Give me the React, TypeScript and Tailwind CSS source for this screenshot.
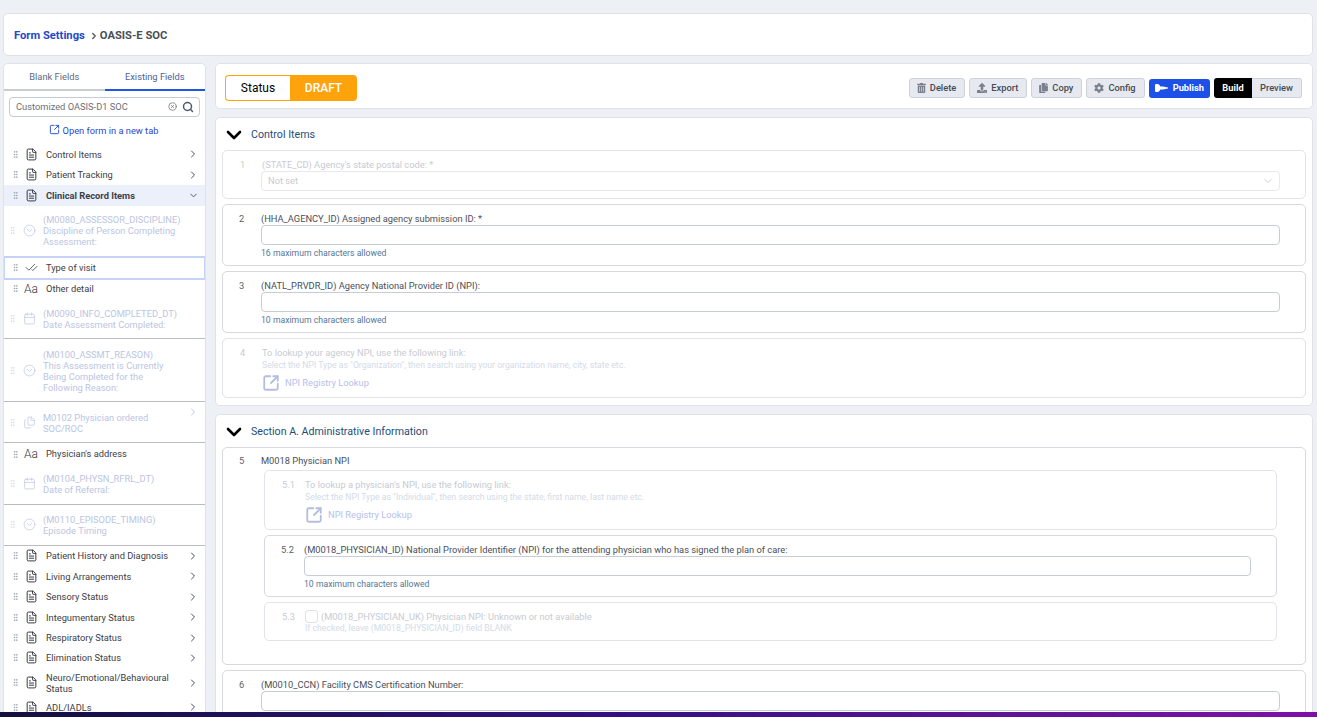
import type { ReactNode } from "react";
import {
  ChevronDown,
  ChevronRight,
  CircleChevronDown,
  CheckCheck,
  Calendar,
  FileText,
  Files,
  GripVertical,
  Search,
  CircleX,
  SquareArrowOutUpRight,
} from "lucide-react";
import { FaTrashAlt, FaCopy, FaCog, FaUpload } from "react-icons/fa";

const DIM = "text-[#bcc5e2]";

function Grip({ dim }: { dim?: boolean }) {
  return <GripVertical className={`w-[9px] h-[9px] shrink-0 ${dim ? "text-[#d5d9e6]" : "text-[#9aa0ac]"}`} />;
}

function GroupRow({ label, open, h = "h-[20.4px]" }: { label: string; open?: boolean; h?: string }) {
  return (
    <div className={`flex items-center pl-[7px] pr-[6px] ${h} ${open ? "bg-[#ebf0fb]" : ""}`}>
      <Grip />
      <FileText className="w-[13px] h-[13px] ml-[5px] text-[#33373f] shrink-0" strokeWidth={1.8} />
      <span className={`ml-[8px] flex-1 text-[9.3px] leading-[11px] text-[#3c4048] ${open ? "font-bold" : ""}`}>{label}</span>
      {open ? (
        <ChevronDown className="w-[11px] h-[11px] text-[#4a4f58]" />
      ) : (
        <ChevronRight className="w-[12px] h-[12px] text-[#4a4f58]" />
      )}
    </div>
  );
}

function DimRow({ lines, icon, h, caret, nudge = "" }: { lines: string[]; icon: ReactNode; h: string; caret?: boolean; nudge?: string }) {
  return (
    <div className={`relative flex items-center pl-[4px] pr-[9px] border-b border-[#b9bcc2] ${h} ${nudge}`}>
      <Grip dim />
      <span className={`ml-[4px] w-[17px] flex justify-center shrink-0 ${DIM}`}>{icon}</span>
      <div className={`ml-[5px] text-[9.3px] leading-[11px] ${DIM}`}>
        {lines.map((l) => (
          <div key={l}>{l}</div>
        ))}
      </div>
      {caret && <ChevronRight className={`absolute right-[6px] top-[4px] w-[12px] h-[12px] ${DIM}`} />}
    </div>
  );
}

function TextRow({ label, h }: { label: string; h: string }) {
  return (
    <div className={`flex items-center pl-[7px] ${h}`}>
      <Grip />
      <span className="ml-[2px] w-[18px] text-center text-[12px] font-light leading-none text-[#33373f]">Aa</span>
      <span className="ml-[6px] text-[9.3px] text-[#3c4048]">{label}</span>
    </div>
  );
}

function Sidebar() {
  return (
    <aside className="w-[203px] shrink-0 bg-white rounded-t-[5px] border border-[#dfe3e9] border-b-0 overflow-hidden">
      <div className="flex h-[27px] text-[9.3px]">
        <div className="flex-1 flex items-center justify-center border-b-[2px] border-[#c8ccd3] text-[#5d6a82]">Blank Fields</div>
        <div className="flex-1 flex items-center justify-center border-b-[2px] border-[#1f57e0] text-[#4a60a0]">Existing Fields</div>
      </div>
      <div className="mx-[5px] mt-[6px] h-[20px] flex items-center pl-[6px] pr-[5px] rounded-[4px] border border-[#c6cad3]">
        <span className="flex-1 text-[9.3px] text-[#6b7078]">Customized OASIS-D1 SOC</span>
        <CircleX className="w-[9px] h-[9px] text-[#6b7078] mb-[2px]" />
        <Search className="ml-[5px] w-[12px] h-[12px] text-[#4c5a6b]" strokeWidth={3} />
      </div>
      <div className="h-[27px] pr-[2px] flex items-center justify-center gap-[3px] text-[9.3px] text-[#1f48d0]">
        <SquareArrowOutUpRight className="w-[11px] h-[11px] mb-[2px]" />
        <span>Open form in a new tab</span>
      </div>
      <GroupRow label="Control Items" />
      <GroupRow label="Patient Tracking" h="h-[21px]" />
      <GroupRow label="Clinical Record Items" open />
      <div className="relative flex items-center pl-[4px] h-[50px]">
        <Grip dim />
        <span className={`ml-[4px] w-[17px] flex justify-center ${DIM}`}>
          <CircleChevronDown className="w-[13px] h-[13px]" strokeWidth={1.3} />
        </span>
        <div className={`ml-[5px] text-[9.3px] leading-[11px] ${DIM}`}>
          <div>(M0080_ASSESSOR_DISCIPLINE)</div>
          <div>Discipline of Person Completing</div>
          <div>Assessment:</div>
        </div>
      </div>
      <div className="flex items-center pl-[6px] h-[24px] border-2 border-[#c5d3f8] -mx-px">
        <Grip />
        <CheckCheck className="ml-[4px] w-[15px] h-[13px] text-[#33373f]" strokeWidth={1.4} />
        <span className="ml-[7px] text-[9.3px] text-[#3c4048]">Type of visit</span>
      </div>
      <TextRow label="Other detail" h="h-[18px]" />
      <DimRow
        h="h-[41px]"
        nudge="pt-[2px]"
        icon={<Calendar className="w-[13px] h-[13px]" strokeWidth={1.3} />}
        lines={["(M0090_INFO_COMPLETED_DT)", "Date Assessment Completed:"]}
      />
      <DimRow
        h="h-[63px]"
        nudge="pt-[2px]"
        icon={<CircleChevronDown className="w-[13px] h-[13px]" strokeWidth={1.3} />}
        lines={["(M0100_ASSMT_REASON)", "This Assessment is Currently", "Being Completed for the", "Following Reason:"]}
      />
      <DimRow
        h="h-[41px]"
        nudge="pt-[2px]"
        caret
        icon={<Files className="w-[13px] h-[13px]" strokeWidth={1.3} />}
        lines={["M0102 Physician ordered", "SOC/ROC"]}
      />
      <TextRow label="Physician's address" h="h-[23px]" />
      <DimRow
        h="h-[39px]"
        nudge="pb-[2px]"
        icon={<Calendar className="w-[13px] h-[13px]" strokeWidth={1.3} />}
        lines={["(M0104_PHYSN_RFRL_DT)", "Date of Referral:"]}
      />
      <DimRow
        h="h-[41px]"
        icon={<CircleChevronDown className="w-[13px] h-[13px]" strokeWidth={1.3} />}
        lines={["(M0110_EPISODE_TIMING)", "Episode Timing"]}
      />
      <GroupRow label="Patient History and Diagnosis" />
      <GroupRow label="Living Arrangements" />
      <GroupRow label="Sensory Status" />
      <GroupRow label="Integumentary Status" />
      <GroupRow label="Respiratory Status" />
      <GroupRow label="Elimination Status" />
      <GroupRow label="Neuro/Emotional/Behavioural Status" h="h-[29px]" />
      <GroupRow label="ADL/IADLs" />
    </aside>
  );
}

function ToolButton({ icon, label }: { icon: ReactNode; label: string }) {
  return (
    <button className="h-[20px] flex items-center gap-[4px] pl-[7px] pr-[8px] rounded-[3px] border border-[#ced2da] bg-[#e6e9ef] text-[9.3px] font-medium text-[#454a54]">
      <span className="text-[#7a808c]">{icon}</span>
      {label}
    </button>
  );
}

function Toolbar() {
  return (
    <div className="h-[46px] pt-[4px] shrink-0 bg-white rounded-[5px] border border-[#dfe3e9] flex items-center justify-between pl-[9px] pr-[10px]">
      <div className="flex h-[26px] text-[12px]">
        <div className="w-[65px] flex items-center justify-center rounded-l-[4px] border border-r-0 border-[#ffa30d] text-black">Status</div>
        <div className="w-[67px] flex items-center justify-center rounded-r-[4px] bg-[#ffa30d] text-white font-medium">DRAFT</div>
      </div>
      <div className="flex items-center gap-[4px]">
        <ToolButton icon={<FaTrashAlt className="w-[9px] h-[10px]" />} label="Delete" />
        <ToolButton icon={<FaUpload className="w-[10px] h-[10px]" />} label="Export" />
        <ToolButton icon={<FaCopy className="w-[9px] h-[10px]" />} label="Copy" />
        <ToolButton icon={<FaCog className="w-[10px] h-[10px]" />} label="Config" />
        <button className="h-[19px] flex items-center gap-[5px] px-[6px] rounded-[3px] bg-[#1d50e6] text-[9.3px] font-bold text-white">
          <svg viewBox="0 0 13 8" className="w-[13px] h-[8px]" fill="currentColor">
            <path d="M0 1 Q0 0 1 0 L3 0 Q4.5 .6 5.5 2.4 L8 2.6 L13 3.6 L13 4.6 L8 5.4 L5.5 5.6 Q4.5 7.4 3 8 L1 8 Q0 8 0 7 Z" />
          </svg>
          Publish
        </button>
        <div className="flex h-[20px] text-[9.3px] font-medium">
          <div className="w-[38px] flex items-center justify-center rounded-l-[3px] bg-black text-white font-bold">Build</div>
          <div className="w-[50px] flex items-center justify-center rounded-r-[3px] border border-l-0 border-[#ced2da] bg-[#e6e9ef] text-[#454a54]">Preview</div>
        </div>
      </div>
    </div>
  );
}

function SectionTitle({ children }: { children: ReactNode }) {
  return (
    <div className="h-[32px] pt-[2px] flex items-center">
      <ChevronDown className="w-[24px] h-[24px] text-black" strokeWidth={2.6} />
      <span className="ml-[5px] text-[10.65px] text-[#1d4d78]">{children}</span>
    </div>
  );
}

function FieldBox({ num, h, dim, nested, children }: { num: string; h?: string; dim?: boolean; nested?: boolean; children: ReactNode }) {
  const pad = dim ? (nested ? "pl-[40px]" : "pl-[39px]") : nested ? "pl-[39px]" : "pl-[38px]";
  return (
    <div className={`relative rounded-[5px] border ${dim ? "border-[#e2e4e9]" : "border-[#d7d9de]"} ${pad} pr-[25px] ${h ?? ""}`}>
      <span className={`absolute top-[7px] text-[9.3px] leading-[13px] ${dim ? "left-[17px] text-[#c8cbd2]" : "left-[16px] text-[#5a5f69]"}`}>{num}</span>
      {children}
    </div>
  );
}

function Label({ dim, children }: { dim?: boolean; children: ReactNode }) {
  return <div className={`pt-[7px] text-[9.3px] leading-[13px] ${dim ? "text-[#c8cbd2]" : "text-[#4a4f5a]"}`}>{children}</div>;
}

function Input() {
  return <div className="h-[20px] rounded-[4px] border border-[#c8ccd6] bg-white" />;
}

function Hint({ children }: { children: ReactNode }) {
  return <div className="mt-[3px] text-[8.66px] leading-[11px] text-[#54769a]">{children}</div>;
}

function LookupLink() {
  return (
    <div className="mt-[3px] flex items-center gap-[5px] text-[9.3px] text-[#b5c0ee]">
      <SquareArrowOutUpRight className="w-[18px] h-[18px] text-[#b4bfe0]" strokeWidth={2.4} />
      <span>NPI Registry Lookup</span>
    </div>
  );
}

function SubHint({ children }: { children: ReactNode }) {
  return <div className="text-[8.66px] leading-[12px] text-[#d3dbe8]">{children}</div>;
}

function Content() {
  return (
    <div className="flex-1 min-w-0 flex flex-col gap-[8px] overflow-hidden">
      <Toolbar />
      <section className="h-[289px] shrink-0 bg-white rounded-[5px] border border-[#dfe3e9] px-[6px]">
        <SectionTitle>Control Items</SectionTitle>
        <div className="flex flex-col gap-[5px]">
          <FieldBox num="1" dim h="h-[49px]">
            <Label dim>(STATE_CD) Agency's state postal code: *</Label>
            <div className="h-[20px] -ml-px rounded-[4px] border border-[#e6e8ec] flex items-center justify-between pl-[6px] pr-[5px] text-[9.3px] text-[#c8cbd2]">
              Not set
              <ChevronDown className="w-[12px] h-[12px] text-[#c8cbd2]" />
            </div>
          </FieldBox>
          <FieldBox num="2" h="h-[62px]">
            <Label>(HHA_AGENCY_ID) Assigned agency submission ID: *</Label>
            <Input />
            <Hint>16 maximum characters allowed</Hint>
          </FieldBox>
          <FieldBox num="3" h="h-[62px]">
            <Label>(NATL_PRVDR_ID) Agency National Provider ID (NPI):</Label>
            <Input />
            <Hint>10 maximum characters allowed</Hint>
          </FieldBox>
          <FieldBox num="4" dim h="h-[60px]">
            <Label dim>To lookup your agency NPI, use the following link:</Label>
            <SubHint>Select the NPI Type as "Organization", then search using your organization name, city, state etc.</SubHint>
            <LookupLink />
          </FieldBox>
        </div>
      </section>
      <section className="flex-1 bg-white rounded-t-[5px] border border-b-0 border-[#dfe3e9] px-[6px] overflow-hidden">
        <SectionTitle>Section A. Administrative Information</SectionTitle>
        <div className="flex flex-col gap-[5px]">
          <div className="relative h-[218px] shrink-0 rounded-[5px] border border-[#d7d9de] pl-[38px] pr-[28px]">
            <span className="absolute left-[16px] top-[6px] text-[9.3px] leading-[13px] text-[#5a5f69]">5</span>
            <div className="pt-[6px] pb-[3px] text-[9.3px] leading-[13px] text-[#4a4f5a]">M0018 Physician NPI</div>
            <div className="ml-[3px] flex flex-col gap-[5px]">
              <FieldBox num="5.1" dim nested h="h-[60px]">
                <Label dim>To lookup a physician's NPI, use the following link:</Label>
                <SubHint>Select the NPI Type as "Individual", then search using the state, first name, last name etc.</SubHint>
                <LookupLink />
              </FieldBox>
              <FieldBox num="5.2" nested h="h-[62px]">
                <Label>(M0018_PHYSICIAN_ID) National Provider Identifier (NPI) for the attending physician who has signed the plan of care:</Label>
                <Input />
                <Hint>10 maximum characters allowed</Hint>
              </FieldBox>
              <FieldBox num="5.3" dim nested h="h-[39px]">
                <div className="pt-[7px] flex items-center gap-[3px] text-[9.3px] leading-[13px] text-[#c8cbd2]">
                  <span className="w-[13px] h-[13px] rounded-[3px] border border-[#dfe1e6]" />
                  (M0018_PHYSICIAN_UK) Physician NPI: Unknown or not available
                </div>
                <div className="-mt-px">
                  <SubHint>If checked, leave (M0018_PHYSICIAN_ID) field BLANK</SubHint>
                </div>
              </FieldBox>
            </div>
          </div>
          <FieldBox num="6" h="h-[62px]">
            <Label>(M0010_CCN) Facility CMS Certification Number:</Label>
            <Input />
          </FieldBox>
        </div>
      </section>
    </div>
  );
}

export default function App() {
  return (
    <div className="h-screen flex flex-col overflow-hidden bg-[#edf0f5] font-['Roboto',sans-serif]">
      <div className="flex-1 min-h-0 flex flex-col pt-[13px] px-[3px] pr-[4px]">
        <header className="h-[43px] pt-[3px] shrink-0 bg-white rounded-[5px] border border-[#dfe3e9] flex items-center pl-[10px] text-[11.2px] font-bold">
          <span className="text-[#1f48c8]">Form Settings</span>
          <ChevronRight className="ml-[4px] mr-[1px] -mt-px w-[10px] h-[10px] text-[#4a4f58]" strokeWidth={3} />
          <span className="text-[#4a4f58]">OASIS-E SOC</span>
        </header>
        <div className="flex-1 min-h-0 mt-[7px] flex gap-[9px]">
          <Sidebar />
          <Content />
        </div>
      </div>
      <div className="h-[5px] shrink-0 bg-gradient-to-r from-[#14103f] via-[#320e80] via-45% to-[#7f0fa8]" />
    </div>
  );
}
